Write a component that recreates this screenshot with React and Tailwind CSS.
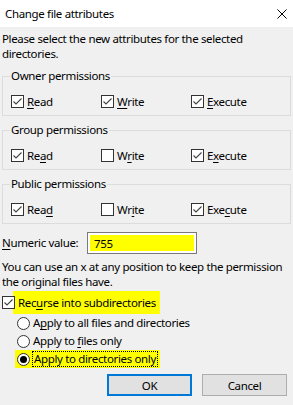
import React from "react";

const font = { fontFamily: '"Noto Sans", "Open Sans", sans-serif' };

function CheckBox({ checked }) {
  return (
    <svg width="13" height="13" viewBox="0 0 13 13" className="shrink-0 relative z-10">
      <rect x="0.5" y="0.5" width="12" height="12" fill="#fff" stroke="#333" strokeWidth="1" />
      {checked && (
        <path d="M2.5 6.5 L5 9 L10.5 3.5" fill="none" stroke="#444" strokeWidth="1.1" />
      )}
    </svg>
  );
}

function Radio({ checked }) {
  return (
    <svg width="13" height="13" viewBox="0 0 13 13" className="shrink-0">
      <circle cx="6.5" cy="6.5" r="6" fill="#fff" stroke="#333" strokeWidth="1" />
      {checked && <circle cx="6.5" cy="6.5" r="3.5" fill="#000" />}
    </svg>
  );
}

function Label({ before, u, after }) {
  return (
    <span className="whitespace-nowrap">
      {before}
      <span className="underline underline-offset-[2px]">{u}</span>
      {after}
    </span>
  );
}

function Check({ checked, before, u, after }) {
  return (
    <div className="flex items-center gap-[3px] w-[90px]">
      <CheckBox checked={checked} />
      <Label before={before} u={u} after={after} />
    </div>
  );
}

function Group({ title, className = "", items }) {
  return (
    <fieldset className={"border border-[#dcdcdc] mx-[2px] " + className}>
      <legend className="ml-[7px] px-[1px] leading-[14px] whitespace-nowrap">{title}</legend>
      <div className="flex h-[13px] items-center pl-[8px] mt-[12px] mb-[7px]">
        {items.map((it, i) => (
          <Check key={i} {...it} />
        ))}
      </div>
    </fieldset>
  );
}

export default function App() {
  return (
    <div
      className="w-[293px] h-[405px] bg-[#f0f0f0] text-[11.5px] tracking-[-0.35px] text-black overflow-hidden whitespace-nowrap"
      style={font}
    >
      <div className="h-[27px] bg-white flex items-center justify-between pl-[5px] pr-[6px]">
        <span className="leading-[15px]">Change file attributes</span>
        <svg width="10" height="10" viewBox="0 0 10 10">
          <path d="M0.5 0.5 L9.5 9.5 M9.5 0.5 L0.5 9.5" stroke="#000" strokeWidth="1" />
        </svg>
      </div>

      <div className="pl-[2px] mt-[4px] leading-[15px]">
        Please select the new attributes for the selected
        <br />
        directories.
      </div>

      <Group
        title="Owner permissions"
        className="mt-[8px]"
        items={[
          { checked: true, before: "", u: "R", after: "ead" },
          { checked: true, before: "", u: "W", after: "rite" },
          { checked: true, before: "", u: "E", after: "xecute" },
        ]}
      />
      <Group
        title="Group permissions"
        className="mt-[7px]"
        items={[
          { checked: true, before: "Re", u: "a", after: "d" },
          { checked: false, before: "W", u: "r", after: "ite" },
          { checked: true, before: "E", u: "x", after: "ecute" },
        ]}
      />
      <Group
        title="Public permissions"
        className="mt-[7px]"
        items={[
          { checked: true, before: "Rea", u: "d", after: "" },
          { checked: false, before: "Wr", u: "i", after: "te" },
          { checked: true, before: "Exe", u: "c", after: "ute" },
        ]}
      />

      <div className="flex items-center h-[22px] mt-[8px] pl-[2px]">
        <span className="w-[85px]">
          <Label before="" u="N" after="umeric value:" />
        </span>
        <div className="w-[110px] h-[22px] border border-[#7a7a7a] bg-white p-[2px]">
          <div className="h-full bg-[#ffff00] flex items-center pl-[4px] leading-[15px]">755</div>
        </div>
      </div>

      <div className="pl-[2px] mt-[5px] leading-[15px]">
        You can use an x at any position to keep the permission
        <br />
        the original files have.
      </div>

      <div className="flex items-center h-[23px] mt-[2px] pl-[2px]">
        <CheckBox checked />
        <span className="bg-[#ffff00] h-[23px] flex items-center -ml-[2px] pl-[5px] pr-[4px]">
          <Label before="Rec" u="u" after="rse into subdirectories" />
        </span>
      </div>

      <div className="pl-[17px]">
        <div className="flex items-center h-[18px] gap-[3px]">
          <Radio />
          <Label before="A" u="p" after="ply to all files and directories" />
        </div>
        <div className="flex items-center h-[18px] gap-[3px]">
          <Radio />
          <Label before="Apply to " u="f" after="iles only" />
        </div>
        <div className="flex items-center h-[18px] -ml-[2px] pl-[2px] pr-[2px] bg-[#ffff00] w-fit gap-[2px]">
          <Radio checked />
          <span className="border border-dotted border-black leading-[14px] pl-[1px] pr-[1px]">
            Apply to directories only
          </span>
        </div>
      </div>

      <div className="flex justify-end gap-[10px] pr-[6px] mt-[6px]">
        <button className="w-[85px] h-[22px] bg-[#e1e1e1] border-2 border-[#0078d7] leading-[15px]">OK</button>
        <button className="w-[85px] h-[22px] bg-[#e1e1e1] border border-[#adadad] leading-[15px]">Cancel</button>
      </div>
    </div>
  );
}
